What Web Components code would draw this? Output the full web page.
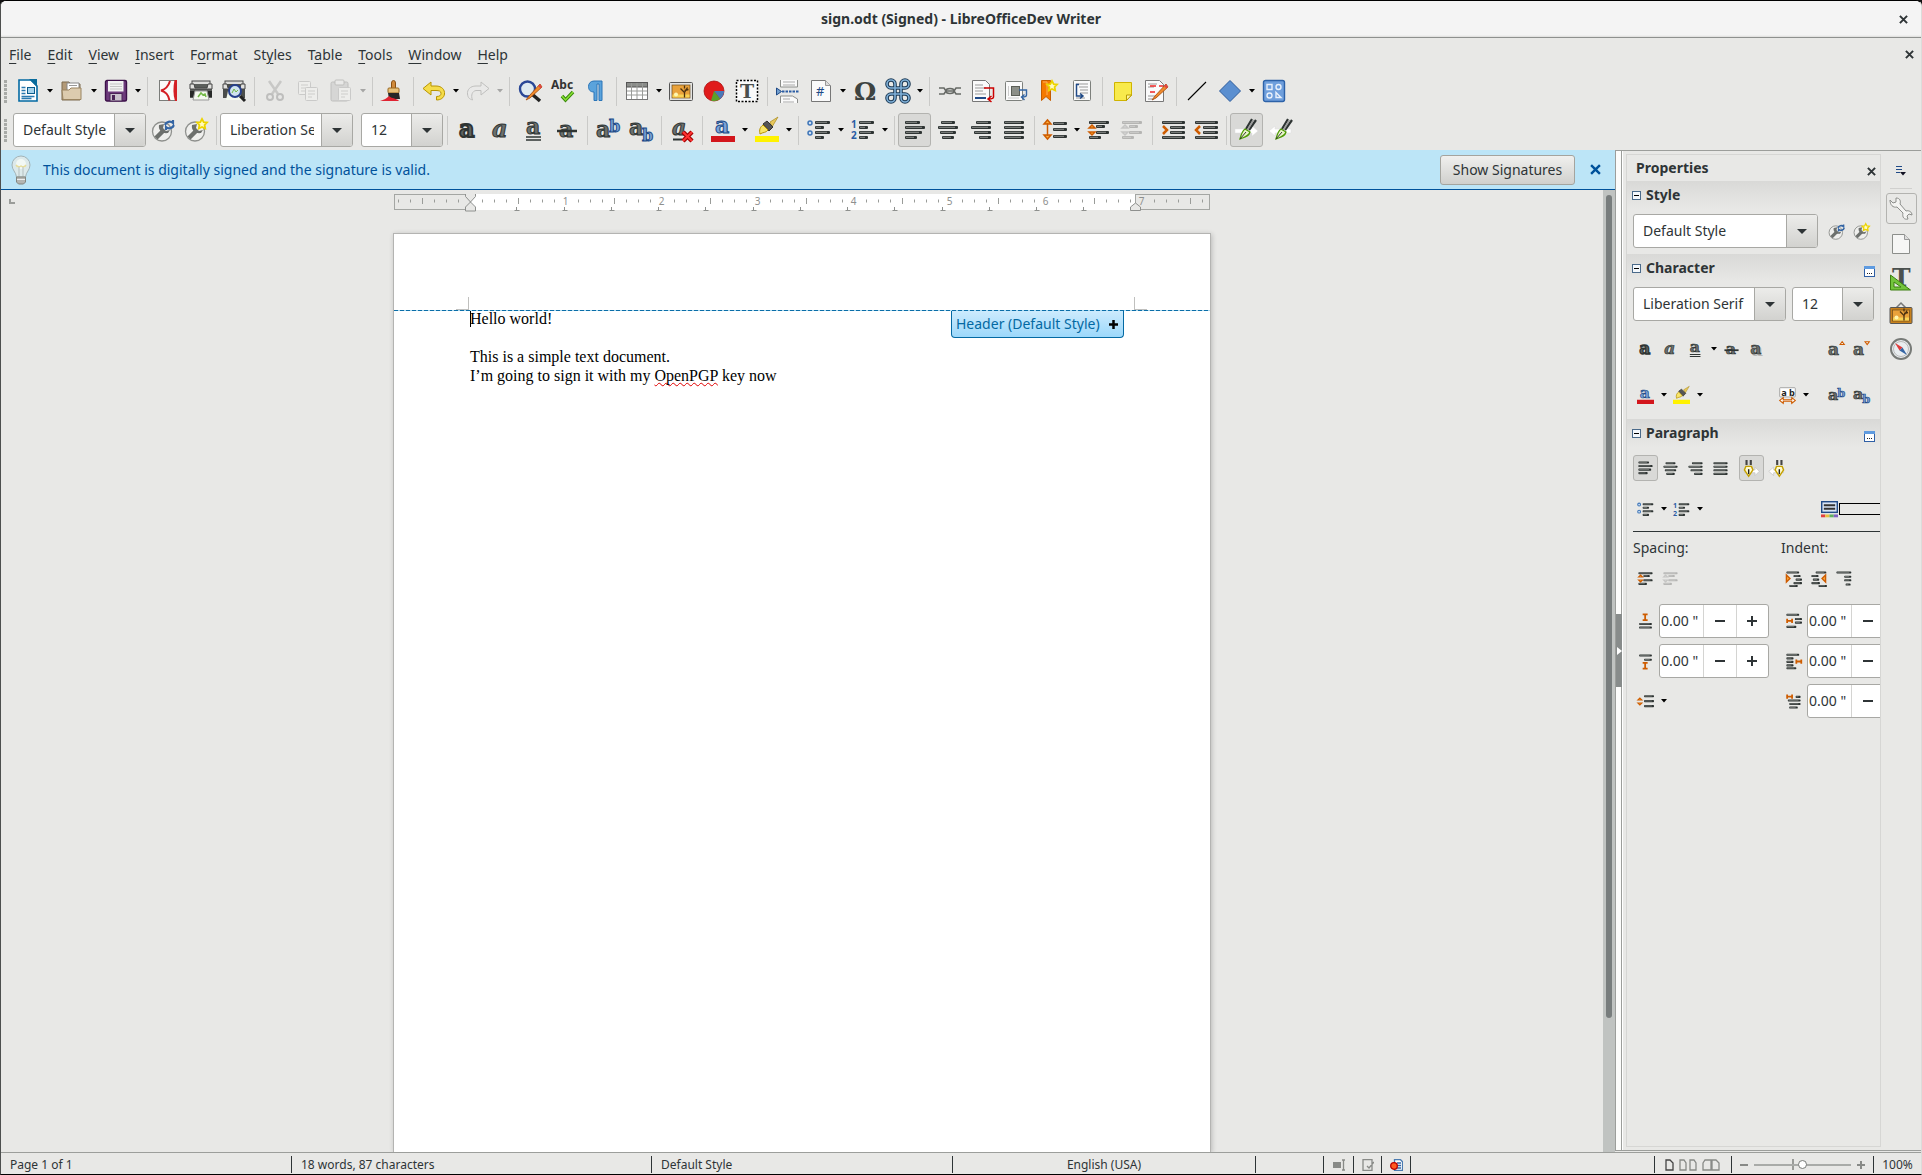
<!DOCTYPE html>
<html lang="en">
<head>
<meta charset="utf-8">
<title>sign.odt (Signed) - LibreOfficeDev Writer</title>
<style>
  html, body {
    height: 100%;
    margin: 0;
  }
  body {
    background: #111;
    color: #2e3436;
    font: 14px/20px "Noto Sans", "Open Sans", sans-serif;
  }
  .typo {
    text-decoration: underline wavy #e00000 1px;
    text-decoration-skip-ink: none;
  }
</style>
</head>
<body>
<writer-window>
  <title-bar slot="title">sign.odt (Signed) - LibreOfficeDev Writer</title-bar>
  <menu-bar slot="menu" items="_File,_Edit,_View,_Insert,F_ormat,St_yles,T_able,_Tools,_Window,_Help"></menu-bar>

  <tool-bar slot="tools" label="Standard">
    <tool-button icon="new" label="New" menu></tool-button>
    <tool-button icon="open" label="Open" menu></tool-button>
    <tool-button icon="save" label="Save" menu></tool-button>
    <tool-sep></tool-sep>
    <tool-button icon="pdf" label="Export as PDF"></tool-button>
    <tool-button icon="print" label="Print"></tool-button>
    <tool-button icon="preview" label="Print Preview"></tool-button>
    <tool-sep></tool-sep>
    <tool-button icon="cut" label="Cut" disabled></tool-button>
    <tool-button icon="copy" label="Copy" disabled></tool-button>
    <tool-button icon="paste" label="Paste" disabled menu></tool-button>
    <tool-sep></tool-sep>
    <tool-button icon="brush" label="Clone Formatting"></tool-button>
    <tool-sep></tool-sep>
    <tool-button icon="undo" label="Undo" menu></tool-button>
    <tool-button icon="redo" label="Redo" disabled menu></tool-button>
    <tool-sep></tool-sep>
    <tool-button icon="find" label="Find and Replace"></tool-button>
    <tool-button icon="spell" label="Spelling"></tool-button>
    <tool-button icon="pilcrow" label="Formatting Marks"></tool-button>
    <tool-sep></tool-sep>
    <tool-button icon="table" label="Table" menu></tool-button>
    <tool-button icon="image" label="Image"></tool-button>
    <tool-button icon="chart" label="Chart"></tool-button>
    <tool-button icon="textbox" label="Text Box"></tool-button>
    <tool-sep></tool-sep>
    <tool-button icon="pagebreak" label="Page Break"></tool-button>
    <tool-button icon="field" label="Field" menu></tool-button>
    <tool-button icon="omega" label="Special Character"></tool-button>
    <tool-button icon="command" label="Symbols" menu></tool-button>
    <tool-sep></tool-sep>
    <tool-button icon="link" label="Hyperlink"></tool-button>
    <tool-button icon="footnote" label="Footnote"></tool-button>
    <tool-button icon="endnote" label="Endnote"></tool-button>
    <tool-button icon="bookmark" label="Bookmark"></tool-button>
    <tool-button icon="xref" label="Cross-reference"></tool-button>
    <tool-sep></tool-sep>
    <tool-button icon="note" label="Comment"></tool-button>
    <tool-button icon="track" label="Track Changes"></tool-button>
    <tool-sep></tool-sep>
    <tool-button icon="line" label="Line"></tool-button>
    <tool-button icon="diamond" label="Basic Shapes" menu></tool-button>
    <tool-button icon="shapes" label="Draw Functions"></tool-button>
  </tool-bar>

  <tool-bar slot="tools" label="Formatting" class="last">
    <combo-box value="Default Style" label="Paragraph Style" style="width: 133px"></combo-box>
    <tool-button icon="styleupdate" label="Update Style"></tool-button>
    <tool-button icon="stylenew" label="New Style"></tool-button>
    <tool-sep></tool-sep>
    <combo-box value="Liberation Serif" label="Font Name" style="width: 133px"></combo-box>
    <tool-sep blank></tool-sep>
    <combo-box value="12" label="Font Size" style="width: 82px"></combo-box>
    <tool-sep></tool-sep>
    <tool-button icon="bold" label="Bold"></tool-button>
    <tool-button icon="italic" label="Italic"></tool-button>
    <tool-button icon="underline" label="Underline"></tool-button>
    <tool-button icon="strike" label="Strikethrough"></tool-button>
    <tool-sep></tool-sep>
    <tool-button icon="sup" label="Superscript"></tool-button>
    <tool-button icon="sub" label="Subscript"></tool-button>
    <tool-sep></tool-sep>
    <tool-button icon="clear" label="Clear Formatting"></tool-button>
    <tool-sep></tool-sep>
    <tool-button icon="fontcolor" label="Font Color" menu></tool-button>
    <tool-button icon="highlight" label="Highlighting" menu></tool-button>
    <tool-sep></tool-sep>
    <tool-button icon="bullets" label="Bullets" menu></tool-button>
    <tool-button icon="numbering" label="Numbering" menu></tool-button>
    <tool-sep></tool-sep>
    <tool-button icon="left" label="Align Left" pressed></tool-button>
    <tool-button icon="center" label="Center"></tool-button>
    <tool-button icon="right" label="Align Right"></tool-button>
    <tool-button icon="justify" label="Justified"></tool-button>
    <tool-sep></tool-sep>
    <tool-button icon="spacing" label="Line Spacing" menu></tool-button>
    <tool-button icon="parainc" label="Increase Spacing"></tool-button>
    <tool-button icon="paradec" label="Decrease Spacing" disabled></tool-button>
    <tool-sep></tool-sep>
    <tool-button icon="indent" label="Increase Indent"></tool-button>
    <tool-button icon="outdent" label="Decrease Indent"></tool-button>
    <tool-sep></tool-sep>
    <tool-button icon="ltr" label="Left-To-Right" pressed></tool-button>
    <tool-button icon="rtl" label="Right-To-Left"></tool-button>
  </tool-bar>

  <info-bar slot="main" action="Show Signatures">This document is digitally signed and the signature is valid.</info-bar>
  <doc-view slot="main">
    <p>Hello world!</p>
    <p>&nbsp;</p>
    <p>This is a simple text document.</p>
    <p>I’m going to sign it with my <span class="typo">OpenPGP</span> key now</p>
  </doc-view>
  <side-bar slot="side"></side-bar>
  <status-bar slot="status"></status-bar>
</writer-window>

<script>
// ---- icon drawing -------------------------------------------------------

const bar = (x, y, w) =>
  `<rect x="${x}" y="${y}" width="${w}" height="3" rx="1" fill="#2e3433"/><path d="M${x + 1} ${y + 1.3}h${w - 4}" stroke="#8b8e8b"/>`
const bars = (...list) => list.map(b => bar(...b)).join('')
const glyph = (ch, x, y, size, extra = '') =>
  `<text x="${x}" y="${y}" font-size="${size}" font-family="DejaVu Serif, serif" font-weight="bold" fill="#6b706e" stroke="#2e3433" stroke-width="1" ${extra}>${ch}</text>`
const blue = 'style="fill:#7ba3d8;stroke:#204a87"'
const sheet = (x, y, w, h) =>
  `<rect x="${x}" y="${y}" width="${w}" height="${h}" rx="1" fill="#fafafa" stroke="#7d807c"/>`
const star = (x, y) =>
  `<path transform="translate(${x} ${y})" d="M0-5 1.700-1.800 5-1.500 2.600 1 3.200 4.500 0 3-3.200 4.500-2.600 1-5-1.500-1.700-1.800z" fill="#fffbc0" stroke="#edd400" stroke-width="1.800"/>`
const wrench = `<circle cx="11" cy="13.500" r="9.500" fill="#efefed" stroke="#8f918e" stroke-width="1.300"/><path d="M5 20l7-7" stroke="#6d706d" stroke-width="4.500"/><path d="M8 7c-1 5 3 9 9 8l2-3-4 1-3-3 1-4z" fill="#6d706d"/>`
const picture = (x, y, w, h, frame) =>
  `<rect x="${x}" y="${y}" width="${w}" height="${h}" rx="1" fill="${frame}" stroke="#555"/><rect x="${x + 2.5}" y="${y + 2.5}" width="${w - 5}" height="${h - 5}" fill="#e9a23b" stroke="#6b4a1a" stroke-width=".7"/><path d="M${x + 3} ${y + h - 6}h${w - 6}v3H${x + 3}z" fill="#f7d255"/><circle cx="${x + 6.5}" cy="${y + h - 6}" r="2" fill="#fff6b0"/><path d="M${x + w - 8} ${y + h - 3}v-5l-4-4m4 4 3-5m-3 3 4-1m-4-1v-3" stroke="#4a3010" stroke-width="1.300" fill="none"/>`
const pen = `<path d="M17 1l-6 10M21 2l-7 10" stroke="#2e3433" stroke-width="2.200"/><path d="M18.500 2l-6 10" stroke="#999" stroke-width="1.500"/><path d="M10 11l5 3c-1 4-5 5-10 7 1-4 2-8 5-10z" fill="#e8f5c8" stroke="#4e9a06" stroke-width="1.300"/><path d="M5 21l6-7" stroke="#333"/>`
const arrowRight = '<path d="M0 11h17V8l6 5-6 5v-3H0z" fill="#fff" stroke="#ddd" stroke-width=".5"/>'
const arrowLeft = '<path d="M23 11H7V8l-6 5 6 5v-3h16z" fill="#fff" stroke="#ddd" stroke-width=".5"/>'
const upDown = (x, y) =>
  `<path d="M${x} ${y - 2}l3-3 3 3zM${x} ${y + 2}l3 3 3-3z" fill="#fcaf3e" stroke="#ce5c00" stroke-width="1.500"/>`
const pencil = '<path d="M22 5 11 17l-3 4 4-2L24 8z" fill="#f08a2c" stroke="#a34a0a" stroke-width=".8"/><path d="M20 7l2.500 2.500L24 8l-2-3z" fill="#e04545"/>'
const hMark = (x, y) => `<path d="M${x} ${y}v6m7-6v6m-7-3h7" stroke="#ce5c00" stroke-width="2.500" fill="none"/>`
const vMark = (x, y) => `<path d="M${x} ${y}h7m-7 8h7m-3.500-8v8" stroke="#ce5c00" stroke-width="2.500" fill="none"/>`

const ICONS = {
  new: `<path d="M3 1h12l6 6v15H3z" fill="#fff" stroke="#0369a3" stroke-width="1.600"/><path d="M13 0h8v8z" fill="#0a6c9c"/><path d="M5.500 8.500h4m-4 3h4m-4 3h4m-4 3h13m-13 2h10" stroke="#2a7ab0" stroke-width="1.400"/><rect x="11.500" y="8.500" width="7" height="6" fill="#a6d3ec" stroke="#0a5c8c"/>`,
  open: `<path d="M2 3h7l2 2h9v16H2z" fill="#b39a78" stroke="#7c6a4e"/><path d="M7 4h12v8H7z" fill="#fff" stroke="#888"/><path d="M9 6.500h8" stroke="#999"/><path d="M2 11h7l2-2h10v11.500H3z" fill="#dccbae" stroke="#9a8460"/>`,
  save: `<rect x="1.500" y="1.500" width="21" height="20.500" rx="1.500" fill="#6d3a7c" stroke="#3c1049" stroke-width="1.400"/><rect x="4" y="2" width="15.500" height="10.500" fill="#f2f2f2"/><path d="M6 5h12M6 7.500h12M6 10h12" stroke="#c4c4c4"/><rect x="6" y="14.500" width="12" height="7.500" fill="#c9c2cc" stroke="#4b2457"/><rect x="8" y="16" width="3" height="5" fill="#4b2457"/>`,
  pdf: `<rect x="3.500" y="1.500" width="17" height="20" fill="#fbfbfb" stroke="#7b7d7a"/><path d="M18.500 1H21v21h-2c-2-6-2-14-.500-21z" fill="#d42026"/><path d="M14 2c-1.500 5-5 8.500-9 9.500 4 1 7.500 4 8.500 10" fill="none" stroke="#d42026" stroke-width="2"/>`,
  print: `<rect x="3" y="2" width="18" height="5" fill="#dcdcda" stroke="#444"/><path d="M1 5h22v14H1z" fill="#5b5e5b"/><path d="M1 5h4l1 4h12l1-4h4v5H1z" fill="#e2e2df" stroke="#444"/><path d="M1 12h22v6H1z" fill="#282a28"/><path d="M6 12h12l2 9H4z" fill="#f4f9ee" stroke="#999"/><path d="M9 18l3-4 2 2 2-1 1 3" stroke="#73b946" fill="none" stroke-width="1.500"/>`,
  preview: `<rect x="3" y="2" width="18" height="5" fill="#dcdcda" stroke="#444"/><path d="M1 5h22v14H1z" fill="#4b4e4b"/><path d="M1 5h4l1 4h12l1-4h4v5H1z" fill="#e2e2df" stroke="#444"/><path d="M6 12h12l2 9H4z" fill="#f4f9ee"/><circle cx="13" cy="12" r="6" fill="#cfe3ee" stroke="#26408c" stroke-width="2"/><path d="M10 14l2-4 2 3 2-2" stroke="#73b946" fill="none"/><path d="M18 17l5 5" stroke="#222" stroke-width="3"/>`,
  cut: `<path d="M6 2l9 13M18 2L9 15" stroke="#777" stroke-width="2.500"/><circle cx="7" cy="18" r="3" fill="none" stroke="#555" stroke-width="2"/><circle cx="17" cy="18" r="3" fill="none" stroke="#555" stroke-width="2"/>`,
  copy: `${sheet(2.5, 2.500, 12, 13)}<path d="M5 6h7m-7 3h7m-7 3h4" stroke="#888"/>${sheet(9.5, 8.500, 12, 13)}<path d="M12 12h7m-7 3h7m-7 3h4" stroke="#888"/>`,
  paste: `<rect x="2" y="3" width="17" height="19" rx="1.500" fill="#aaa" stroke="#555"/><rect x="6" y="1" width="9" height="5" rx="1" fill="#eee" stroke="#555"/>${sheet(9.5, 8.500, 12, 13)}<path d="M12 12h7m-7 3h7m-7 3h4" stroke="#888"/>`,
  brush: `<path d="M10.500 4a2 2.500 0 0 1 4 0v6h-4z" fill="#d08a3c" stroke="#8a5012"/><rect x="7" y="9" width="11" height="5" rx="1" fill="#e8c27a" stroke="#9a6820"/><path d="M7 14h11l1 6H8z" fill="#272727"/><path d="M8 17c3 3 8 2 10 5H-1c4-1 7-3 9-5z" fill="#e02432"/>`,
  undo: `<path d="M1 9.500 9 3v4h5c6 0 9 4 8.500 8-.5 4-4 6-8 6v-3.500c3 0 4.500-1 4.500-3.200S17 11.500 14 11.500H9V16z" fill="#f5dc4a" stroke="#b89400"/>`,
  redo: `<path d="M23 9.500 15 3v4h-5c-6 0-9 4-8.500 8 .5 4 2 5 5 6-2-5 0-9 3.500-9.500h5V16z" fill="#eee" stroke="#555"/>`,
  find: `<circle cx="9.500" cy="10" r="7.500" fill="#dfeaf0" stroke="#2a4796" stroke-width="2.400"/><path d="M15 16l7 6" stroke="#222" stroke-width="3.500"/>${pencil}`,
  spell: `<text x="0" y="10" font-size="12" font-weight="bold" font-family="Noto Sans" fill="#333">Abc</text><path d="M11 17l3.500 4L22 13" fill="none" stroke="#3a8a0c" stroke-width="3.500"/><path d="M11 17l3.500 4L22 13" fill="none" stroke="#8ae234" stroke-width="1.500"/>`,
  pilcrow: `<path d="M18 2v19.500h-3V5h-2v16.500h-3V13C6 13 4.500 10.500 4.500 7.500S6.500 2 10 2z" fill="#5ba3dc" stroke="#2a75b8"/>`,
  table: `<rect x="1.500" y="3.500" width="21" height="17" fill="#fff" stroke="#777"/><rect x="1.500" y="3.500" width="21" height="4.500" fill="#8b8d8a" stroke="#555"/><path d="M2 12h20M2 16h20M6.500 4v16M12 4v16M17.500 4v16" stroke="#9a9c99"/>`,
  image: picture(.5, 3.5, 23, 18, '#e4e4e2'),
  chart: `<circle cx="12" cy="12" r="10" fill="#e01b1b" stroke="#a40000" stroke-width=".7"/><path d="M12 12h10a10 10 0 0 1-3.800 8z" fill="#4a78b8"/><path d="M12 12l6.200 8a10 10 0 0 1-9.200 1.500z" fill="#5aa02c"/>`,
  textbox: `<rect x="1.500" y="1.500" width="21" height="21" fill="#fafafa" stroke="#000" stroke-width="1.500" stroke-dasharray="2 1.500"/><text x="5" y="19" font-size="19" font-family="DejaVu Serif" font-weight="bold" fill="#4b504e">T</text>`,
  pagebreak: `<path d="M4.500 1v7h17V1M4.500 24v-7h12l5 3v4" fill="#fafafa" stroke="#8c8e8b"/><path d="M7 3h12m-12 3h12M7 20h7m-7 3h11" stroke="#aaa"/><path d="M6 12.500h17" stroke="#2a5ca4" stroke-width="2" stroke-dasharray="2.500 1"/><path d="M.5 9v7l5-3.500z" fill="#729fcf" stroke="#204a87"/>`,
  field: `<path d="M2.500 1.500h14l5 5v16h-19z" fill="#fafafa" stroke="#777"/><path d="M16.500 1.500v5h5" fill="#ddd" stroke="#999"/><text x="7" y="17" font-size="13" font-family="Noto Sans" fill="#204a87">#</text>`,
  omega: `<text x="1" y="21" font-size="25" font-family="DejaVu Serif" font-weight="bold" fill="#3d4341">Ω</text>`,
  command: `<path d="M9 9h6v6H9zM9 9H5a4 4 0 1 1 4-4zM15 9V5a4 4 0 1 1 4 4zM9 15v4a4 4 0 1 1-4-4zM15 15h4a4 4 0 1 1-4 4z" fill="none" stroke="#1d3a55" stroke-width="3.600"/><path d="M9 9h6v6H9zM9 9H5a4 4 0 1 1 4-4zM15 9V5a4 4 0 1 1 4 4zM9 15v4a4 4 0 1 1-4-4zM15 15h4a4 4 0 1 1-4 4z" fill="none" stroke="#7fb0d8" stroke-width="1.600"/>`,
  link: `<path d="M1 9h5l2 3-2 3H1M23 9h-5l-2 3 2 3h5M7 12h10" fill="none" stroke="#666965" stroke-width="1.600"/><ellipse cx="12" cy="12" rx="4" ry="2.500" fill="none" stroke="#666965" stroke-width="1.600"/>`,
  footnote: `<path d="M1.500 1.500h13l4 4v17h-17z" fill="#fafafa" stroke="#777"/><path d="M4 6h8m-8 3h11m-11 3h8m-8 3h11" stroke="#999"/><path d="M4 19h11" stroke="#204a87" stroke-width="2"/><path d="M13 9h9.500v9q0 2-5 2m3-3-3.500 3 3.500 3" fill="none" stroke="#cc0000" stroke-width="1.500"/>`,
  endnote: `${sheet(1.5, 2.500, 17, 19)}<rect x="7.500" y="7.500" width="8" height="9" fill="#8c8f88" stroke="#5c5f58"/><path d="M4 19h11M4.500 7v10" stroke="#ccc"/><path d="M15 11h7.500v5q0 2-4 2m2-2.500-3 2.500 3 3" fill="none" stroke="#3465a4" stroke-width="1.400"/>`,
  bookmark: `<path d="M4.500 1.500h9v20l-4.500-4-4.500 4z" fill="#f57900" stroke="#c45c00"/><path d="M6 3h4v13" fill="none" stroke="#fcaf5e"/>${star(15, 7)}`,
  xref: `${sheet(3.5, 1.500, 17, 20)}<path d="M6 5h12M9 8h9m-8 3h8m-8 3h8M6 19h9" stroke="#999"/><path d="M9 5.500H6.500V17H13m-3-2.500 3 2.500-3 2.500" fill="none" stroke="#204a87" stroke-width="1.500"/>`,
  note: `<path d="M3.500 3.500h17v13l-5 5h-12z" fill="#f8ea4c" stroke="#d0b400"/><path d="M20.500 16h-5v5.500z" fill="#fff7a0" stroke="#b89c00"/>`,
  track: `<path d="M1.500 1.500h14l4 4v17h-18z" fill="#fafafa" stroke="#777"/><path d="M4 5h9m-9 3h6m-6 9h10m-10 3h6" stroke="#999"/><path d="M6 7h6m3 0h4m-13 6h5" stroke="#ef2929" stroke-width="1.500"/>${pencil}`,
  line: `<path d="M3 21 21 3" stroke="#000" stroke-width="1.100"/>`,
  diamond: `<path d="M12 1.500 22.500 12 12 22.500 1.500 12z" fill="#5b8fd0" stroke="#2d5c9c"/>`,
  shapes: `<rect x="1.500" y="1.500" width="21" height="21" rx="2" fill="#6f9fdc" stroke="#2d62a8" stroke-width="1.400"/><g fill="none" stroke="#e8f0fb" stroke-width="1.400"><path d="M5 5.500h5v5H5zM14 13.500v5h5z"/><circle cx="16.500" cy="8" r="2.500"/><circle cx="7.500" cy="16.500" r="2.500"/></g>`,
  styleupdate: `${wrench}<path d="M14 7a5 5 0 0 1 8-2V2M23 7a5 5 0 0 1-8 2v3" fill="none" stroke="#3465a4" stroke-width="2.200"/>`,
  stylenew: wrench + star(18, 6),

  bold: `<text x="3" y="19" font-size="24" font-family="DejaVu Serif" font-weight="bold" fill="#5e6361" stroke="#2e3433" stroke-width="1.800">a</text>`,
  italic: glyph('a', 3, 19, 24, 'font-style="italic"'),
  underline: glyph('a', 4, 16, 22) + '<path d="M4 19h15m-15 3h15" stroke="#2e3433" stroke-width="1.500"/>',
  strike: glyph('a', 4, 19, 22) + '<path d="M2 13h20" stroke="#2e3433" stroke-width="2.500"/>',
  sup: glyph('a', 0, 19, 22) + glyph('b', 13, 14, 16, blue),
  sub: glyph('a', 0, 17, 22) + glyph('b', 13, 23, 16, blue),
  clear: glyph('a', 2, 17, 22, 'font-style="italic"') + '<path d="M3 21.500h9" stroke="#2e3433" stroke-width="2"/><path d="M13 14l9 9m0-9-9 9" stroke="#a40000" stroke-width="4.500"/><path d="M13 14l9 9m0-9-9 9" stroke="#f33" stroke-width="2"/>',
  fontcolor: glyph('a', 4, 15, 22, blue) + '<rect y="18" width="24" height="6" fill="#d3161c"/>',
  highlight: '<path d="M15 4l8-5-6 10z" fill="#e8c85c" stroke="#a88a20" stroke-width=".7"/><path d="M8 6l4-3 6 6-4 4z" fill="#555" stroke="#333"/><path d="M8 7l5 5c-2 3-5 2-8 4-1-4 0-7 3-9z" fill="#f8e56a" stroke="#b89400"/><rect y="18" width="24" height="6" fill="#fff200"/>',
  bullets: bars([8, 3, 15], [8, 8, 9], [8, 13, 15], [8, 18, 9]) + '<g fill="#cfe0f4" stroke="#3f76b8" stroke-width="1.500"><circle cx="3" cy="5" r="2"/><circle cx="3" cy="15" r="2"/></g>',
  numbering: bars([8, 3, 15], [8, 8, 9], [8, 13, 15], [8, 18, 9]) + '<g font-family="Noto Sans" font-weight="bold" font-size="10" fill="#2a5ca4"><text x="0" y="10">1</text><text x="0" y="21">2</text></g>',
  left: bars([2, 3, 15], [2, 8, 20], [2, 13, 17], [2, 18, 12]),
  center: bars([5, 3, 14], [2, 8, 20], [4, 13, 16], [6, 18, 12]),
  right: bars([7, 3, 15], [2, 8, 20], [5, 13, 17], [10, 18, 12]),
  justify: bars([2, 3, 20], [2, 8, 20], [2, 13, 20], [2, 18, 20]),
  spacing: bars([10, 4, 14], [10, 10, 14], [10, 17, 14]) + '<path d="M4.500 5v13M1 6l3.500-4L8 6zM1 17l3.500 4L8 17z" fill="#fcaf3e" stroke="#ce5c00" stroke-width="1.500"/>',
  parainc: bars([2, 3, 20], [9, 7, 9], [9, 13, 13], [2, 18, 12]) + upDown(2, 12),
  paradec: bars([2, 3, 20], [9, 7, 9], [9, 13, 13], [2, 18, 12]) + upDown(2, 12),
  indent: bars([1, 3, 23], [9, 8, 15], [9, 13, 15], [1, 18, 23]) + '<path d="M2 8l4 4-4 4" fill="none" stroke="#ce5c00" stroke-width="2.500"/>',
  outdent: bars([1, 3, 23], [9, 8, 15], [9, 13, 15], [1, 18, 23]) + '<path d="M6 8l-4 4 4 4" fill="none" stroke="#ce5c00" stroke-width="2.500"/>',
  ltr: arrowRight + pen,
  rtl: arrowLeft + `<g transform="translate(3 0)">${pen}</g>`,

  // sidebar only
  shadow: '<text x="5" y="21" font-size="25" font-family="DejaVu Serif" font-weight="bold" fill="#b8b8b6">a</text>' + glyph('a', 3, 19, 24),
  grow: glyph('a', 0, 20, 24) + '<path d="M17 5l3-4 3 4z" fill="#fff" stroke="#ce5c00" stroke-width="1.500"/>',
  shrink: glyph('a', 0, 20, 24) + '<path d="M17 1h6l-3 4z" fill="#fff" stroke="#ce5c00" stroke-width="1.500"/>',
  kerning: '<rect x="1" y="1" width="22" height="13" rx="1" fill="#fff" stroke="#888"/><text x="3" y="12" font-size="13" font-weight="bold" font-family="Noto Sans" fill="#222">a b</text><path d="M1 19l5-4v3h12v-3l5 4-5 4v-3H6v3z" fill="#fff" stroke="#ce5c00" stroke-width="1.500"/>',
  penltr: '<path d="M4 14h13v-4l6 6-6 6v-4H2z" fill="#fff" stroke="#c4c4c2"/><path d="M5 0v7m6-7v7" stroke="#444" stroke-width="3"/><path d="M4 9h8l2 5-6 9-6-9z" fill="#fffbd0" stroke="#c4a000" stroke-width="2"/><path d="M8 13v7" stroke="#222" stroke-width="2"/>',
  penrtl: '<path d="M20 14H8v-4l-7 6 7 6v-4h14z" fill="#fff" stroke="#c4c4c2"/><path d="M13 0v7m6-7v7" stroke="#444" stroke-width="3"/><path d="M12 9h8l2 5-6 9-6-9z" fill="#fffbd0" stroke="#c4a000" stroke-width="2"/><path d="M16 13v7" stroke="#222" stroke-width="2"/>',
  bgcolor: '<rect x="1" y="1" width="22" height="15" fill="#d8e4f4" stroke="#204a87" stroke-width="2"/><path d="M4 6h16M4 11h16" stroke="#333" stroke-width="3"/><path d="M0 21h6" stroke="#e04040" stroke-width="4"/><path d="M6 21h6" stroke="#e8c040" stroke-width="4"/><path d="M12 21h6" stroke="#60b060" stroke-width="4"/><path d="M18 21h6" stroke="#8060c0" stroke-width="4"/>',
  sideleft: bars([2, 2, 15], [2, 7, 20], [2, 12, 18], [2, 17, 13]),
  sideindent: bars([2, 2, 18], [12, 7, 10], [15, 12, 9], [12, 17, 12], [6, 21, 12]) + '<path d="M2 7l5 5-5 5z" fill="#fcaf3e" stroke="#ce5c00" stroke-width="2"/>',
  sideoutdent: bars([8, 2, 15], [2, 7, 10], [4, 12, 9], [2, 17, 12], [12, 21, 12]) + '<path d="M22 7l-5 5 5 5z" fill="#fcaf3e" stroke="#ce5c00" stroke-width="2"/>',
  hanging: bars([2, 2, 21], [13, 8, 10], [13, 13, 10], [15, 19, 7]),
  above: vMark(8, 2) + bars([3, 14, 18], [3, 19, 18]),
  below: bars([3, 2, 18], [10, 8, 11]) + vMark(8, 14),
  before: bars([2, 1, 18], [14, 7, 10], [14, 12, 10], [2, 18, 14]) + hMark(3, 8),
  after: bars([2, 1, 18], [2, 6, 10], [2, 11, 10], [2, 16, 10], [2, 20, 14]) + hMark(16, 9),
  first: hMark(3, 2) + bars([15, 4, 7], [4, 9, 18], [6, 14, 16], [6, 19, 12]),
  linespace: bars([10, 3, 14], [10, 10, 14], [10, 17, 14]) + upDown(1, 12),

  // tab bar
  wrenchtab: '<path d="M1 3l3 3 3-1V1c4 0 5 3 4 6l6 7c3-1 6 1 6 4l-3-1-2 2 1 3c-4 1-6-2-5-6L8 10C4 11 1 8 1 3z" fill="#f4f4f2" stroke="#8c8e8b"/>',
  pagetab: '<path d="M3.500 2.500h12l5 5v14h-17z" fill="#f6f6f5" stroke="#8c8e8b"/><path d="M15.500 2.500v5h5" fill="#ddd" stroke="#999"/>',
  styletab: '<text x="3" y="19" font-size="25" font-family="DejaVu Serif" font-weight="bold" fill="#4b504e">T</text><path d="M1.500 8v15h20z" fill="#73c53c" stroke="#3d7f10"/><path d="M5 15v5h7z" fill="#e8e8e6" stroke="#3d7f10"/>',
  gallerytab: '<path d="M7 6l5-5 5 5" fill="none" stroke="#777" stroke-width="1.500"/>' + picture(1, 5.5, 22, 16, '#c8811c'),
  compass: '<circle cx="12" cy="12" r="10" fill="#e9edf0" stroke="#777a77" stroke-width="2"/><circle cx="12" cy="12" r="7.500" fill="none" stroke="#bbb"/><path d="M6 6l7.500 4.500-3 3z" fill="#e03c3c"/><path d="M18 18l-7.500-4.500 3-3z" fill="#3465a4"/>'
}

const icon = (name, size = 24) =>
  `<svg width="${size}" height="${size}" viewBox="0 0 24 24" overflow="visible" aria-hidden="true">${ICONS[name] || ''}</svg>`

const CARET = '<svg width="6" height="4" viewBox="0 0 6 4" aria-hidden="true"><path d="M0 0h6L3 3.500z"/></svg>'
const cross = size =>
  `<svg width="${size}" height="${size}" viewBox="0 0 10 10" aria-hidden="true"><path d="M1 1l8 8M9 1L1 9" stroke="currentColor" stroke-width="2.200"/></svg>`

const BASE = `
  *, *::before, *::after { box-sizing: border-box; }
  button, input { margin: 0; padding: 0; border: 0; font: inherit; color: inherit; background: none; }
  svg { display: block; flex: none; }
`

class BaseElement extends HTMLElement {
  constructor() {
    super()
    this.attachShadow({ mode: 'open' })
  }

  connectedCallback() {
    this.shadowRoot.innerHTML = `<style>${BASE}${this.styles()}</style>${this.markup()}`
  }

  styles() {
    return ''
  }

  markup() {
    return '<slot></slot>'
  }
}

// ---- window -------------------------------------------------------------

class WriterWindow extends BaseElement {
  styles() {
    return `
    :host {
      display: flex;
      flex-direction: column;
      height: 100vh;
      box-sizing: border-box;
      border: 1px solid #000;
      border-left-color: #4d4f4e;
      border-right-color: #dcdcda;
      border-radius: 6px 6px 0 0;
      background: #e8e8e6;
      overflow: hidden;
    }
    .body { flex: 1; display: flex; min-height: 0; }
    .main { flex: 1; display: flex; flex-direction: column; min-width: 0; }
    `
  }

  markup() {
    return `
    <slot name="title"></slot>
    <slot name="menu"></slot>
    <slot name="tools"></slot>
    <div class="body">
      <div class="main"><slot name="main"></slot></div>
      <slot name="side"></slot>
    </div>
    <slot name="status"></slot>
    `
  }
}

class TitleBar extends BaseElement {
  styles() {
    return `
    :host {
      display: grid;
      grid-template-columns: 36px 1fr 36px;
      align-items: center;
      height: 37px;
      box-sizing: border-box;
      border-bottom: 1px solid #8e908e;
      background: linear-gradient(#f4f4f4 34px, #dcdcda);
      text-align: center;
    }
    button { grid-column: 3; justify-self: center; }
    h1 { grid-column: 2; margin: 0; font-size: 14px; line-height: 20px; }
    `
  }

  markup() {
    return `<h1><slot></slot></h1><button aria-label="Close window">${cross(9)}</button>`
  }
}

class MenuBar extends BaseElement {
  styles() {
    return `
    :host { display: flex; align-items: center; height: 35px; box-sizing: border-box; padding: 0 7px 2px 8px; }
    nav { flex: 1; display: flex; gap: 16px; }
    u { text-underline-offset: 3px; }
    `
  }

  markup() {
    const items = this.getAttribute('items').split(',')
      .map(t => `<button>${t.replace(/_(.)/, '<u>$1</u>')}</button>`)
    return `<nav>${items.join('')}</nav><button aria-label="Close document">${cross(9)}</button>`
  }
}

// ---- toolbars -----------------------------------------------------------

class ToolBar extends BaseElement {
  styles() {
    return `
    :host { display: flex; align-items: center; height: 36px; }
    :host(.last) { height: 41px; padding-top: 1px; box-sizing: border-box; }
    .grip {
      width: 3px;
      height: 23px;
      margin: 0 4px 0 3px;
      background: repeating-linear-gradient(#a8aaa7 0 3px, transparent 3px 4px);
    }
    :host(.last) .grip { margin-right: 6px; }
    `
  }

  markup() {
    this.setAttribute('role', 'toolbar')
    this.setAttribute('aria-label', this.getAttribute('label'))
    return '<span class="grip"></span><slot></slot>'
  }
}

class ToolSep extends BaseElement {
  styles() {
    return `
    :host { display: flex; justify-content: center; width: 8px; height: 29px; }
    i { width: 1px; background: #cacac8; }
    :host([blank]) i { background: none; }
    `
  }

  markup() {
    return '<i></i>'
  }
}

class ToolButton extends BaseElement {
  styles() {
    return `
    :host { display: inline-flex; flex: none; height: 34px; }
    :host([small]) { height: 26px; }
    button { display: grid; place-items: center; }
    .main { width: 33px; border: 1px solid transparent; border-radius: 3px; }
    :host([small]) .main { width: 25px; }
    :host([pressed]) .main { background: #d9d9d7; border-color: #b3b3b0; }
    .menu { width: 11px; }
    :host([disabled]) svg { opacity: .28; filter: grayscale(1); }
    `
  }

  markup() {
    const label = this.getAttribute('label')
    const off = this.hasAttribute('disabled') ? 'disabled' : ''
    const size = this.hasAttribute('small') ? 17 : 24
    const menu = this.hasAttribute('menu') ? `<button class="menu" ${off} aria-label="${label} options">${CARET}</button>` : ''
    return `<button class="main" ${off} aria-label="${label}" title="${label}">${icon(this.getAttribute('icon'), size)}</button>${menu}`
  }
}

class ComboBox extends BaseElement {
  styles() {
    return `
    :host {
      display: flex;
      flex: none;
      height: 34px;
      box-sizing: border-box;
      border: 1px solid #a8a8a4;
      border-radius: 3px;
      background: #fff;
      overflow: hidden;
    }
    input { flex: 1; min-width: 0; padding: 0 7px 0 9px; }
    button {
      display: grid;
      place-items: center;
      width: 31px;
      border-left: 1px solid #a8a8a4;
      background: linear-gradient(#ececea, #d2d2cf);
    }
    `
  }

  markup() {
    const label = this.getAttribute('label')
    return `
    <input type="text" role="combobox" aria-label="${label}" value="${this.getAttribute('value')}">
    <button aria-label="${label} list"><svg width="10" height="5" viewBox="0 0 10 5"><path d="M0 0h10L5 5z" fill="#2e3436"/></svg></button>
    `
  }
}

class SpinBox extends BaseElement {
  styles() {
    return `
    :host {
      display: flex;
      flex: none;
      width: 110px;
      height: 34px;
      box-sizing: border-box;
      border: 1px solid #a8a8a4;
      border-radius: 3px;
      background: #fff;
    }
    input { width: 43px; padding-left: 1px; }
    button { flex: 1; display: grid; place-items: center; border-left: 1px solid #d4d4d2; }
    `
  }

  markup() {
    const label = this.getAttribute('label')
    const sign = d => `<svg width="10" height="10" viewBox="0 0 10 10"><path d="${d}" stroke="#2e3436" stroke-width="2"/></svg>`
    return `
    <input type="text" role="spinbutton" aria-label="${label}" value="0.00 &quot;">
    <button aria-label="Decrease">${sign('M0 5h10')}</button>
    <button aria-label="Increase">${sign('M0 5h10M5 0v10')}</button>
    `
  }
}

// ---- document area ------------------------------------------------------

class InfoBar extends BaseElement {
  styles() {
    return `
    :host {
      display: flex;
      align-items: center;
      height: 40px;
      box-sizing: border-box;
      padding: 0 14px 0 10px;
      border-bottom: 1px solid #00529b;
      background: #bce5f7;
      color: #00529b;
    }
    p { flex: 1; margin: 0 0 0 12px; }
    .action {
      width: 135px;
      height: 30px;
      border: 1px solid #a4a49e;
      border-radius: 3px;
      background: linear-gradient(#f0f0ee, #d0d0cd);
      color: #2e3436;
    }
    .close { margin-left: 15px; }
    `
  }

  markup() {
    return `
    <svg width="20" height="30" viewBox="0 0 20 30" aria-hidden="true">
      <path d="M10 1a9 9 0 0 0-9 9c0 5 4 7 4.500 12h9C15 17 19 15 19 10a9 9 0 0 0-9-9z" fill="#dce9ea" stroke="#a3b3b6"/>
      <ellipse cx="10" cy="9" rx="5" ry="5" fill="#f2f8f4"/>
      <path d="M5 10q2 3 5 1 3 2 5-1" fill="none" stroke="#e6dd9c" stroke-width="1.500"/>
      <path d="M8 12v10m4-10v10" stroke="#b5bfbf"/>
      <path d="M5.500 22h9v5l-2 2h-5l-2-2z" fill="#b4b6b3" stroke="#83857f"/>
      <path d="M6 24.500h8" stroke="#eee"/>
    </svg>
    <p><slot></slot></p>
    <button class="action">${this.getAttribute('action')}</button>
    <button class="close" aria-label="Close">${cross(11)}</button>
    `
  }
}

class PageRuler extends BaseElement {
  styles() {
    return `
    :host { display: block; }
    text { font: 10px "Noto Sans", sans-serif; fill: #8e908e; text-anchor: middle; }
    `
  }

  markup() {
    const inch = 96
    const start = 76
    const end = 741
    let marks = ''
    for (let i = -6; i <= 61; i++) {
      const x = start + i * inch / 8 + .5
      if (x > 812) break
      if (i % 8 === 0) {
        if (i > 0) marks += `<text x="${x - 1}" y="11">${i / 8}</text>`
      } else {
        const h = i % 4 === 0 ? 6 : 3
        marks += `<path d="M${x} ${7 - h / 2}v${h}" stroke="#9a9c99"/>`
      }
    }
    for (let i = 1; i < 14; i++) {
      const x = Math.round(start + i * 47.25) - .5
      marks += `<path d="M${x} 13v3M${x - 2} 16.500h5" stroke="#8e908e"/>`
    }
    return `
    <svg width="816" height="18" viewBox="0 0 816 18" aria-hidden="true">
      <rect x="${start}" width="${end - start}" height="16" fill="#fff"/>
      <rect x=".5" y=".5" width="${start}" height="15" fill="#e8e8e6" stroke="#a4a6a3"/>
      <rect x="${end + .5}" y=".5" width="74" height="15" fill="#e8e8e6" stroke="#a4a6a3"/>
      ${marks}
      <path d="M71.500-.5h10v3l-5 5.500 5 5v4h-10v-4l5-5-5-5.500z" fill="#e8e8e6" stroke="#8e908e"/>
      <path d="M741.500 9l5 4v3.500h-10V13z" fill="#e8e8e6" stroke="#8e908e"/>
    </svg>
    `
  }
}

class DocView extends BaseElement {
  styles() {
    return `
    :host { flex: 1; display: flex; min-height: 0; }
    .corner { width: 6px; height: 5px; margin: 9px 0 0 8px; border: solid #9a9c99; border-width: 0 0 2px 2px; }
    .canvas { flex: 1; display: flex; flex-direction: column; align-items: center; margin-left: -14px; overflow: hidden; }
    page-ruler { margin-top: 4px; }
    .page {
      position: relative;
      flex: 1;
      width: 818px;
      box-sizing: border-box;
      margin-top: 21px;
      border: solid #b4b4b2;
      border-width: 1px 1px 0;
      background: #fff;
      box-shadow: 1px 1px 5px rgba(0, 0, 0, .2);
    }
    .header {
      position: relative;
      height: 77px;
      background: repeating-linear-gradient(90deg, #0b6ea8 0 4px, #a8d8f0 4px 6px) bottom / 100% 1px no-repeat;
    }
    .header::before, .header::after {
      content: "";
      position: absolute;
      bottom: 1px;
      width: 13px;
      height: 13px;
      border: solid #c0c0be;
    }
    .header::before { left: 62px; border-width: 0 1px 1px 0; }
    .header::after { right: 63px; border-width: 0 0 1px 1px; }
    .tab {
      position: absolute;
      top: 77px;
      right: 86px;
      display: flex;
      align-items: center;
      justify-content: space-between;
      width: 173px;
      height: 27px;
      padding: 0 5px 0 4px;
      border: 1px solid #0369a3;
      border-top: 0;
      border-radius: 0 0 4px 4px;
      background: linear-gradient(#cdebfd, #9cd8fb);
      color: #0369a3;
    }
    .text {
      margin-top: -2px;
      padding: 0 76px;
      color: #000;
      font: 16px/19px "Liberation Serif", "Times New Roman", serif;
    }
    .caret { position: absolute; top: 77px; left: 76px; width: 1px; height: 16px; background: #000; }
    ::slotted(p) { margin: 0; }
    .scroll { width: 12px; padding: 5px 3px 0; background: #c0c3c1; }
    .thumb { height: 86%; border-radius: 3px; background: #787d7d; }
    `
  }

  markup() {
    return `
    <span class="corner"></span>
    <div class="canvas">
      <page-ruler></page-ruler>
      <article class="page">
        <div class="header"></div>
        <div class="text"><slot></slot></div>
        <span class="caret"></span>
        <button class="tab">Header (Default Style)
          <svg width="9" height="9" viewBox="0 0 9 9"><path d="M0 4.500h9M4.500 0v9" stroke="#000" stroke-width="2.500"/></svg>
        </button>
      </article>
    </div>
    <div class="scroll"><div class="thumb"></div></div>
    `
  }
}

// ---- sidebar ------------------------------------------------------------

class SideSection extends BaseElement {
  styles() {
    return `
    :host { display: block; }
    header {
      display: flex;
      align-items: center;
      gap: 5px;
      height: 28px;
      padding: 0 5px;
      background: linear-gradient(#d9d9d7, #e8e8e6);
    }
    h3 { flex: 1; margin: 0; font-size: 14px; line-height: 20px; }
    .fold { display: grid; place-items: center; width: 9px; height: 9px; border: 1px solid #4a6a8a; background: #f4f8fc; }
    .fold i { width: 5px; height: 1px; background: #000; }
    .more { margin-top: 6px; }
    .body { padding: 5px 6px 6px 6px; }
    `
  }

  markup() {
    const more = this.hasAttribute('more') ? `
      <button class="more" aria-label="More options">
        <svg width="11" height="11" viewBox="0 0 11 11"><rect x=".5" y=".5" width="10" height="10" fill="#fff" stroke="#2f5fa5"/><path d="M0 1.500h11" stroke="#5f9be0" stroke-width="3"/><path d="M3 7.500h1m1 0h1m1 0h1" stroke="#222"/></svg>
      </button>` : ''
    const title = this.getAttribute('heading')
    return `
    <header><button class="fold" aria-label="Collapse ${title}"><i></i></button><h3>${title}</h3>${more}</header>
    <div class="body"><slot></slot></div>
    `
  }
}

class SideBar extends BaseElement {
  styles() {
    return `
    :host {
      display: flex;
      width: 306px;
      box-sizing: border-box;
      border: solid #9c9e9b;
      border-width: 1px 0 1px 1px;
      margin-bottom: 1px;
    }
    .splitter {
      display: flex;
      align-items: center;
      width: 7px;
      margin-right: 3px;
      border: solid #fff;
      border-width: 0 1px 0 0;
      background: linear-gradient(90deg, #fcfcfb 5px, #9c9e9b 5px);
    }
    .splitter button { display: grid; place-items: center; width: 6px; height: 73px; background: #888c8b; }
    .deck { flex: 1; min-width: 0; margin: 3px 0; border: 1px solid #d6d6d4; overflow: hidden; }
    .head { display: flex; align-items: center; height: 26px; padding: 0 4px 0 9px; }
    h2 { flex: 1; margin: 0; font-size: 14px; line-height: 20px; }
    .head button { margin-top: 6px; }
    .row { display: flex; align-items: center; }
    .gap { flex: 1; }
    .char1 { margin-top: 15px; }
    .char2 { margin: 20px 0 5px; }
    .pad { width: 13px; }
    .align { margin-top: 3px; }
    .align .pad { width: 6px; }
    .lists { margin: 15px -6px 0 0; }
    .swatch { width: 41px; height: 12px; margin-left: -3px; border: 1px solid #000; border-right: 0; }
    hr { width: 300px; height: 1px; margin: 9px 0 6px; border: 0; background: #2e3436; }
    .cols { display: grid; grid-template-columns: 148px 148px; }
    .col { display: grid; gap: 6px; align-content: start; }
    .tools { margin-bottom: 6px; height: 28px; }
    .spin { height: 34px; gap: 1px; }
    .tabs { display: flex; flex-direction: column; align-items: center; gap: 4px; width: 40px; padding-top: 14px; }
    .tabs button { display: grid; place-items: center; width: 31px; height: 31px; border: 1px solid transparent; border-radius: 3px; }
    .tabs .opts { height: 10px; }
    .tabs hr { width: 22px; margin: 9px 0 0; background: #d0d0ce; }
    .tabs .on { border-color: #b3b3b0; }
    `
  }

  spin(name, label) {
    return `<div class="row spin"><tool-button small icon="${name}" label="${label}"></tool-button><spin-box label="${label}"></spin-box></div>`
  }

  markup() {
    const tabs = ['wrenchtab', 'pagetab', 'styletab', 'gallerytab', 'compass']
    const names = ['Properties', 'Page', 'Styles', 'Gallery', 'Navigator']
    return `
    <div class="splitter"><button aria-label="Hide sidebar"><svg width="5" height="8" viewBox="0 0 5 8"><path d="M0 0l5 4-5 4z" fill="#fff"/></svg></button></div>
    <section class="deck">
      <div class="head"><h2>Properties</h2><button aria-label="Close sidebar">${cross(9)}</button></div>

      <side-section heading="Style">
        <div class="row">
          <combo-box value="Default Style" label="Style" style="width: 185px"></combo-box>
          <span class="gap"></span>
          <tool-button small icon="styleupdate" label="Update Style"></tool-button>
          <tool-button small icon="stylenew" label="New Style"></tool-button>
        </div>
      </side-section>

      <side-section heading="Character" more>
        <div class="row">
          <combo-box value="Liberation Serif" label="Font" style="width: 153px"></combo-box>
          <span class="gap"></span>
          <combo-box value="12" label="Size" style="width: 82px"></combo-box>
        </div>
        <div class="row char1">
          <tool-button small icon="bold" label="Bold"></tool-button>
          <tool-button small icon="italic" label="Italic"></tool-button>
          <tool-button small icon="underline" label="Underline" menu></tool-button>
          <tool-button small icon="strike" label="Strikethrough"></tool-button>
          <tool-button small icon="shadow" label="Shadow"></tool-button>
          <span class="gap"></span>
          <tool-button small icon="grow" label="Increase Size"></tool-button>
          <tool-button small icon="shrink" label="Decrease Size"></tool-button>
        </div>
        <div class="row char2">
          <tool-button small icon="fontcolor" label="Font Color" menu></tool-button>
          <tool-button small icon="highlight" label="Highlighting" menu></tool-button>
          <span class="gap"></span>
          <tool-button small icon="kerning" label="Character Spacing" menu></tool-button>
          <span class="pad"></span>
          <tool-button small icon="sup" label="Superscript"></tool-button>
          <tool-button small icon="sub" label="Subscript"></tool-button>
        </div>
      </side-section>

      <side-section heading="Paragraph" more>
        <div class="row align">
          <tool-button small icon="sideleft" label="Align Left" pressed></tool-button>
          <tool-button small icon="center" label="Center"></tool-button>
          <tool-button small icon="right" label="Align Right"></tool-button>
          <tool-button small icon="justify" label="Justified"></tool-button>
          <span class="pad"></span>
          <tool-button small icon="penltr" label="Left-To-Right" pressed></tool-button>
          <tool-button small icon="penrtl" label="Right-To-Left"></tool-button>
        </div>
        <div class="row lists">
          <tool-button small icon="bullets" label="Bullets" menu></tool-button>
          <tool-button small icon="numbering" label="Numbering" menu></tool-button>
          <span class="gap"></span>
          <tool-button small icon="bgcolor" label="Background Color"></tool-button>
          <span class="swatch"></span>
        </div>
        <hr>
        <div class="cols">
          <div class="col">
            <div>Spacing:</div>
            <div class="row tools">
              <tool-button small icon="parainc" label="Increase Spacing"></tool-button>
              <tool-button small icon="paradec" label="Decrease Spacing" disabled></tool-button>
            </div>
            ${this.spin('above', 'Above Paragraph')}
            ${this.spin('below', 'Below Paragraph')}
            <div class="row spin"><tool-button small icon="linespace" label="Line Spacing" menu></tool-button></div>
          </div>
          <div class="col">
            <div>Indent:</div>
            <div class="row tools">
              <tool-button small icon="sideindent" label="Increase Indent"></tool-button>
              <tool-button small icon="sideoutdent" label="Decrease Indent"></tool-button>
              <tool-button small icon="hanging" label="Hanging Indent"></tool-button>
            </div>
            ${this.spin('before', 'Before Text')}
            ${this.spin('after', 'After Text')}
            ${this.spin('first', 'First Line')}
          </div>
        </div>
      </side-section>
    </section>
    <nav class="tabs">
      <button class="opts" aria-label="Sidebar Settings"><svg width="10" height="10" viewBox="0 0 10 10"><path d="M0 .500h6M0 3.500h6M0 6.500h4" stroke="#204a87"/><path d="M4 6h6L7 9.500z" fill="#112"/></svg></button>
      <hr>
      ${tabs.map((t, i) => `<button class="${i ? '' : 'on'}" aria-label="${names[i]}">${icon(t)}</button>`).join('')}
    </nav>
    `
  }
}

// ---- status bar ---------------------------------------------------------

class StatusBar extends BaseElement {
  styles() {
    return `
    :host {
      display: grid;
      grid-template-columns: 291fr 360fr 301fr 303fr 68px 30px 28px 29px 244fr 77px 142px 47px;
      height: 22px;
      box-sizing: border-box;
      border-top: 1px solid #9c9e9b;
      font-size: 12px;
      line-height: 16px;
    }
    div { display: flex; align-items: center; margin: 3px 0 1px; padding-left: 9px; border-right: 1px solid #2e3436; white-space: nowrap; }
    .mid { justify-content: center; padding: 0; }
    .zoom { gap: 6px; }
    .end { border: 0; }
    input { appearance: none; width: 97px; height: 11px; background: linear-gradient(#999b98, #999b98) 38px 0 / 2px 11px no-repeat; }
    input::-webkit-slider-runnable-track { height: 2px; background: #a9aba8; }
    input::-webkit-slider-thumb { appearance: none; width: 9px; height: 9px; margin-top: -4px; border: 1px solid #777a77; border-radius: 5px; background: #fff; }
    `
  }

  markup() {
    const svg = (w, body) => `<svg width="${w}" height="12" viewBox="0 0 ${w} 12" fill="none" stroke="#888a87" stroke-width="1.300">${body}</svg>`
    return `
    <div>Page 1 of 1</div>
    <div>18 words, 87 characters</div>
    <div>Default Style</div>
    <div class="mid">English (USA)</div>
    <div></div>
    <div class="mid">${svg(12, '<path d="M0 3h8v6H0z" fill="#888a87" stroke="none"/><path d="M9 1h3M9 11h3M10.500 1v10"/>')}</div>
    <div class="mid">${svg(12, '<path d="M1 .700h9v10.600H1zM5 7l2 2 5-6"/>')}</div>
    <div class="mid">${svg(13, '<path d="M4.500.7h6l2 2v8.600h-8z" fill="#fff" stroke="#4a7ab0"/><path d="M7 4h4M7 6.500h4M7 9h4" stroke="#3465a4"/><circle cx="4" cy="7" r="3.300" fill="#ff5a1f" stroke="#b00"/>')}</div>
    <div></div>
    <div class="mid">${svg(56, '<path d="M1 1h4l3 3v7H1z" stroke="#444"/><path d="M15 1h4l2 3v7h-6zM25 1h4l2 3v7h-6zM38 4l2-3h6v10h-8zM47 1h4l3 3v7h-7z"/>')}</div>
    <div class="mid zoom">
      <button aria-label="Zoom out">${svg(8, '<path d="M0 6h8" stroke-width="2"/>')}</button>
      <input type="range" min="0" max="100" value="50" aria-label="Zoom">
      <button aria-label="Zoom in">${svg(8, '<path d="M0 6h8M4 2v8" stroke-width="2"/>')}</button>
    </div>
    <div class="mid end">100%</div>
    `
  }
}

customElements.define('tool-sep', ToolSep)
customElements.define('tool-button', ToolButton)
customElements.define('combo-box', ComboBox)
customElements.define('spin-box', SpinBox)
customElements.define('side-section', SideSection)
customElements.define('page-ruler', PageRuler)
customElements.define('title-bar', TitleBar)
customElements.define('menu-bar', MenuBar)
customElements.define('tool-bar', ToolBar)
customElements.define('info-bar', InfoBar)
customElements.define('doc-view', DocView)
customElements.define('side-bar', SideBar)
customElements.define('status-bar', StatusBar)
customElements.define('writer-window', WriterWindow)
</script>
</body>
</html>
